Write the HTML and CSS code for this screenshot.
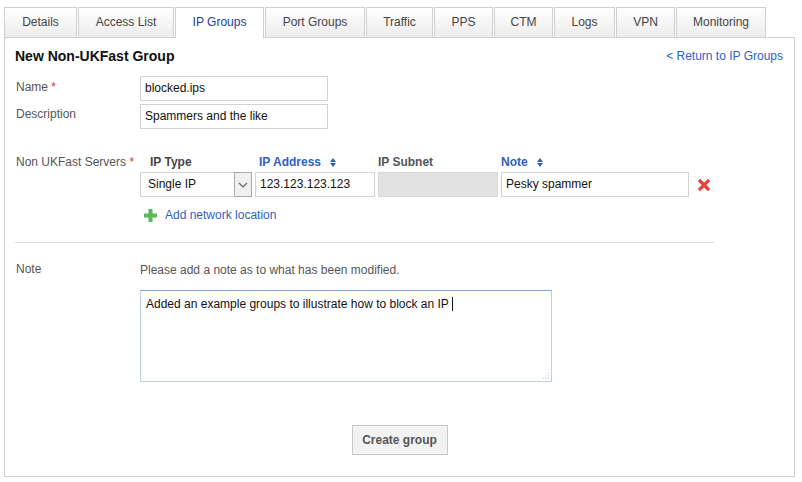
FILE: index.html
```html
<!DOCTYPE html>
<html>
<head>
<meta charset="utf-8">
<link rel="stylesheet" href="styles.css">
</head>
<body>
<div class="page">
  <ul class="tabs">
    <li class="tab t1">Details</li>
    <li class="tab t2">Access List</li>
    <li class="tab t3 active">IP Groups</li>
    <li class="tab t4">Port Groups</li>
    <li class="tab t5">Traffic</li>
    <li class="tab t6">PPS</li>
    <li class="tab t7">CTM</li>
    <li class="tab t8">Logs</li>
    <li class="tab t9">VPN</li>
    <li class="tab t10">Monitoring</li>
  </ul>
  <div class="panel">
    <div class="head">
      <h2 class="title">New Non-UKFast Group</h2>
      <a class="back">&lt; Return to IP Groups</a>
    </div>
    <div class="row r-name">
      <label class="lbl">Name <span class="req">*</span></label>
      <div class="input w187">blocked.ips</div>
    </div>
    <div class="row r-desc">
      <label class="lbl">Description</label>
      <div class="input w187">Spammers and the like</div>
    </div>
    <div class="row r-servers">
      <label class="lbl">Non UKFast Servers <span class="req">*</span></label>
      <div class="servers">
        <div class="cols heads">
          <span class="th c-type">IP Type</span>
          <span class="th c-addr sort">IP Address <span class="sorticon"></span></span>
          <span class="th c-sub">IP Subnet</span>
          <span class="th c-note sort">Note <span class="sorticon"></span></span>
        </div>
        <div class="cols line">
          <div class="select c-type"><span class="sel-text">Single IP</span><span class="sel-btn"><svg width="10" height="6" viewBox="0 0 10 6"><path d="M1 1 L5 5 L9 1" fill="none" stroke="#666" stroke-width="1.2"/></svg></span></div>
          <div class="input c-addr">123.123.123.123</div>
          <div class="input disabled c-sub"></div>
          <div class="input c-note">Pesky spammer</div>
          <svg class="del" width="12" height="12" viewBox="0 0 12 12"><path d="M2 2 L10 10 M10 2 L2 10" stroke="#e8413a" stroke-width="3.2" stroke-linecap="square"/></svg>
        </div>
        <div class="add">
          <svg width="13" height="13" viewBox="0 0 13 13"><rect x="4.5" y="0" width="4" height="13" fill="#5cb85c"/><rect x="0" y="4.5" width="13" height="4" fill="#5cb85c"/></svg>
          <a class="addlink">Add network location</a>
        </div>
      </div>
    </div>
    <hr class="sep">
    <div class="row r-note">
      <label class="lbl">Note</label>
      <div class="notebox">
        <p class="hint">Please add a note as to what has been modified.</p>
        <div class="textarea">Added an example groups to illustrate how to block an IP <span class="caret"></span><span class="grip"></span></div>
      </div>
    </div>
    <div class="actions">
      <button class="btn">Create group</button>
    </div>
  </div>
</div>
</body>
</html>
```
FILE: styles.css
```css
* { box-sizing: border-box; }
html, body { margin: 0; padding: 0; background: #fff; }
body { font-family: Arial, "Liberation Sans", sans-serif; font-size: 12px; color: #333; }
.page { padding: 7px 7px 6px 4px; width: 802px; height: 482px; }
.tabs { list-style: none; margin: 0; padding: 0; display: flex; gap: 1px; height: 31px; position: relative; z-index: 1; }
.tab { height: 30px; line-height: 28px; text-align: center; border: 1px solid #cfcfcf; border-bottom: none; background: linear-gradient(#ffffff, #ececec); color: #444; font-size: 12px; white-space: nowrap; flex: none; }
.t1 { width: 73px; }
.t2 { width: 96px; }
.t3 { width: 89px; }
.t4 { width: 100px; }
.t5 { width: 67px; }
.t6 { width: 59px; }
.t7 { width: 59px; }
.t8 { width: 61px; }
.t9 { width: 59px; }
.t10 { width: 90px; }
.tab.active { background: #fff; height: 31px; color: #1a3d8f; }
.panel { border: 1px solid #cfcfcf; height: 440px; margin-top: -1px; padding: 0 10px; }
.head { display: flex; justify-content: space-between; align-items: center; height: 35px; padding-top: 0; }
.title { margin: 0; font-size: 14px; font-weight: bold; color: #111; }
.back { color: #2f5fc4; font-size: 12px; margin-right: 1px; }
.row { display: flex; align-items: flex-start; padding-left: 1px; }
.lbl { width: 124px; flex: none; color: #555; line-height: 22px; }
.req { color: #d33; }
.input { height: 25px; border: 1px solid #d2d2d2; background: #fff; color: #111; padding: 0 4px; line-height: 23px; white-space: nowrap; overflow: hidden; }
.w187 { width: 188px; }
.r-name { margin-top: 3px; }
.r-name .lbl { line-height: 22px; }
.r-desc { margin-top: 3px; }
.r-desc .lbl { line-height: 20px; }
.r-servers { margin-top: 23px; }
.r-servers .lbl { line-height: 20px; }
.servers { display: flex; flex-direction: column; }
.cols { display: flex; align-items: center; gap: 3px; }
.heads { height: 20px; }
.th { font-weight: bold; color: #555; }
.th.sort { color: #2f5fc4; }
.c-type { width: 112px; flex: none; }
.heads .c-type { padding-left: 10px; color: #444; }
.heads .c-addr { padding-left: 4px; }
.c-addr { width: 120px; flex: none; }
.c-sub { width: 120px; flex: none; }
.c-note { width: 188px; flex: none; }
.sorticon { display: inline-block; width: 7px; height: 9px; margin-left: 6px; vertical-align: -1px; position: relative; }
.sorticon::before, .sorticon::after { content: ""; position: absolute; left: 0; border-left: 3.5px solid transparent; border-right: 3.5px solid transparent; }
.sorticon::before { top: 0; border-bottom: 4px solid #2f5fc4; }
.sorticon::after { bottom: 0; border-top: 4px solid #2f5fc4; }
.line { margin-top: 0; height: 25px; }
.select { height: 25px; border: 1px solid #d2d2d2; display: flex; background: #fff; }
.sel-text { flex: 1; padding-left: 7px; line-height: 23px; color: #111; }
.sel-btn { width: 18px; border: 1px solid #aaa; background: #f0f0f0; display: flex; align-items: center; justify-content: center; margin: -1px -1px -1px 0; }
.disabled { background: #e2e2e2; border-color: #d8d8d8; }
.del { margin-left: 6px; }
.add { display: flex; align-items: center; gap: 8px; margin-top: 11px; padding-left: 4px; height: 14px; }
.addlink { color: #2f5fc4; }
.sep { border: none; border-top: 1px solid #dcdcdc; margin: 20px 70px 0 0; width: 699px; height: 0; }
.r-note { margin-top: 19px; }
.r-note .lbl { line-height: 14px; }
.notebox { display: flex; flex-direction: column; }
.hint { margin: 1px 0 0 0; color: #555; line-height: 14px; }
.textarea { margin-top: 13px; width: 412px; height: 92px; border: 1px solid #b9d2e8; border-top-color: #7ba6d1; padding: 6px 5px; color: #111; position: relative; line-height: 14px; }
.caret { display: inline-block; width: 1px; height: 14px; background: #111; vertical-align: -3px; }
.grip { position: absolute; right: 2px; bottom: 2px; width: 7px; height: 7px; background: radial-gradient(circle, #999 0.7px, transparent 0.8px) 0 0 / 2.5px 2.5px; clip-path: polygon(100% 0, 100% 100%, 0 100%); }
.actions { display: flex; justify-content: center; margin-top: 43px; }
.btn { font-family: Arial, "Liberation Sans", sans-serif; font-size: 12px; font-weight: bold; color: #555; background: #f2f2f2; border: 1px solid #c8c8c8; height: 30px; padding: 0; width: 96px; white-space: nowrap; margin-left: 0; }
```
